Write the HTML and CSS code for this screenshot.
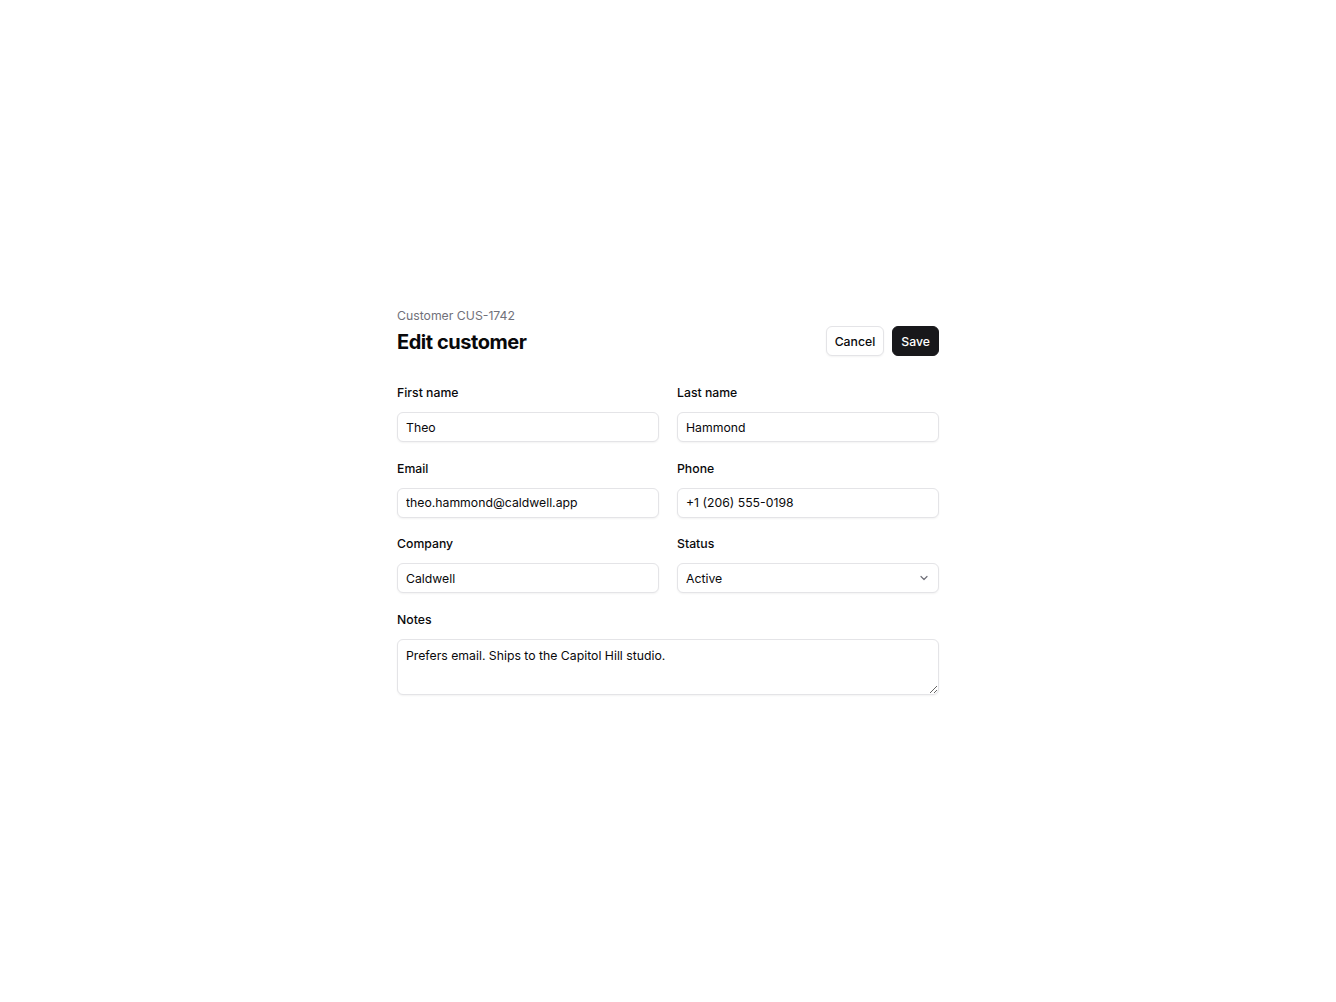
FILE: index.html
```html
<!DOCTYPE html>
<html lang="en">
<head>
<meta charset="utf-8">
<title>Edit customer</title>
<link rel="stylesheet" href="styles.css">
</head>
<body>
<main class="page">
  <form class="card">
    <header class="head">
      <div class="titles">
        <div class="sub">Customer CUS-1742</div>
        <h1 class="title">Edit customer</h1>
      </div>
      <div class="actions">
        <button type="button" class="btn btn-ghost">Cancel</button>
        <button type="button" class="btn btn-dark">Save</button>
      </div>
    </header>
    <div class="grid">
      <label class="field">
        <span class="lbl">First name</span>
        <input class="inp" type="text" value="Theo">
      </label>
      <label class="field">
        <span class="lbl">Last name</span>
        <input class="inp" type="text" value="Hammond">
      </label>
      <label class="field">
        <span class="lbl">Email</span>
        <input class="inp" type="text" value="theo.hammond@caldwell.app">
      </label>
      <label class="field">
        <span class="lbl">Phone</span>
        <input class="inp" type="text" value="+1 (206) 555-0198">
      </label>
      <label class="field">
        <span class="lbl">Company</span>
        <input class="inp" type="text" value="Caldwell">
      </label>
      <label class="field">
        <span class="lbl">Status</span>
        <span class="sel-wrap">
          <select class="inp sel">
            <option>Active</option>
            <option>Inactive</option>
          </select>
          <svg class="chev" width="10" height="10" viewBox="0 0 10 10" aria-hidden="true"><path d="M2 3.5 5 6.5 8 3.5" fill="none" stroke="#71717a" stroke-width="1.2" stroke-linecap="round" stroke-linejoin="round"/></svg>
        </span>
      </label>
      <label class="field full">
        <span class="lbl">Notes</span>
        <textarea class="inp area">Prefers email. Ships to the Capitol Hill studio.</textarea>
      </label>
    </div>
  </form>
</main>
</body>
</html>
```

FILE: styles.css
```css
* { box-sizing: border-box; }
html, body { margin: 0; padding: 0; background: #ffffff; }
body {
  font-family: Inter, "Liberation Sans", Arial, sans-serif;
  color: #09090b;
  -webkit-font-smoothing: antialiased;
}
.page {
  min-height: 100vh;
  display: flex;
  align-items: center;
  justify-content: center;
}
.card {
  width: 542px;
  margin: 0;
}
.head {
  display: flex;
  justify-content: space-between;
  align-items: flex-end;
  margin-bottom: 28px;
}
.sub {
  font-size: 12.25px;
  line-height: 17px;
  color: #71717a;
}
.title {
  margin: 4px 0 0;
  font-size: 20px;
  line-height: 28px;
  font-weight: 700;
  letter-spacing: -0.45px;
}
.actions {
  display: flex;
  gap: 8px;
}
.btn {
  font-family: inherit;
  font-size: 12.25px;
  font-weight: 500;
  height: 30px;
  padding: 0 8px;
  border-radius: 6px;
  cursor: pointer;
}
.btn-ghost {
  background: #fff;
  color: #09090b;
  border: 1px solid #e4e4e7;
  box-shadow: 0 1px 2px rgba(0,0,0,0.05);
}
.btn-dark {
  background: #18181b;
  color: #fff;
  border: 1px solid #18181b;
}
.grid {
  display: grid;
  grid-template-columns: 1fr 1fr;
  column-gap: 18px;
  row-gap: 17.67px;
}
.field {
  display: flex;
  flex-direction: column;
  gap: 10px;
}
.full { grid-column: 1 / -1; }
.lbl {
  font-size: 12.25px;
  line-height: 18px;
  font-weight: 500;
}
.inp {
  font-family: inherit;
  font-size: 12.25px;
  color: #09090b;
  height: 30px;
  padding: 0 8px;
  border: 1px solid #e4e4e7;
  border-radius: 6px;
  background: #fff;
  box-shadow: 0 1px 2px rgba(0,0,0,0.05);
  width: 100%;
  outline: none;
  margin: 0;
}
.sel-wrap {
  position: relative;
  display: block;
}
.sel {
  appearance: none;
  -webkit-appearance: none;
  padding-right: 30px;
}
.chev {
  position: absolute;
  right: 10px;
  top: 10px;
  pointer-events: none;
}
.area {
  height: 56px;
  padding: 7px 8px;
  line-height: 18px;
  resize: vertical;
  display: block;
}
```
